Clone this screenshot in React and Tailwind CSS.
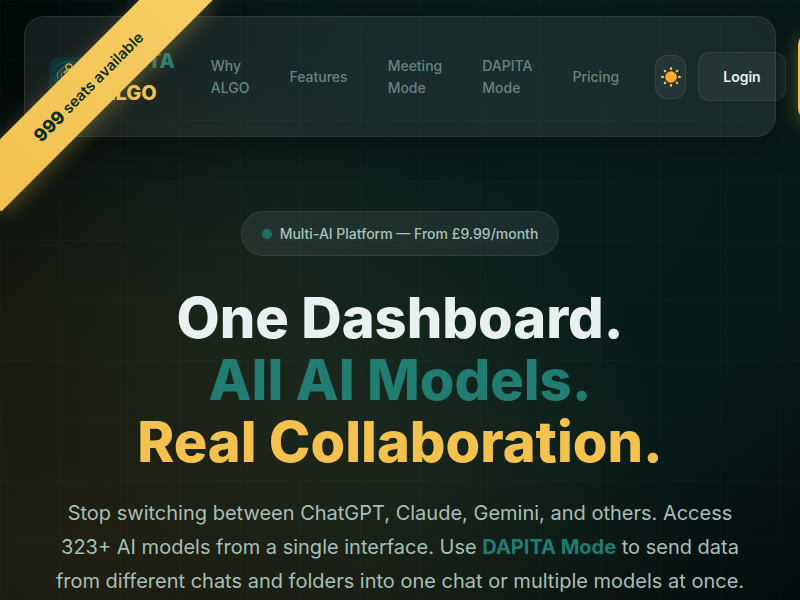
const links = ["Why ALGO", "Features", "Meeting Mode", "DAPITA Mode", "Pricing"];

const SunIcon = () => (
  <svg width="20" height="20" viewBox="0 0 20 20" aria-hidden="true">
    <circle cx="10" cy="10" r="5.8" fill="#ffa92e" />
    {[0, 45, 90, 135, 180, 225, 270, 315].map((angle) => (
      <path
        key={angle}
        d="M10 0 C10.8 0 11.2 0.9 11.2 1.9 C11.2 2.6 10.7 3 10 3 C9.3 3 8.8 2.6 8.8 1.9 C8.8 0.9 9.2 0 10 0 Z"
        fill="#ffbb55"
        transform={`rotate(${angle} 10 10)`}
      />
    ))}
  </svg>
);

const Logo = () => (
  <svg
    width="40"
    height="40"
    viewBox="0 0 40 40"
    className="shrink-0"
    aria-hidden="true"
  >
    <rect width="40" height="40" rx="10" fill="#0b3238" />
    <g fill="none" stroke="#17504f" strokeWidth="1">
      <path d="M5 22 L19 6 L35 20 L20 36 Z" />
      <path d="M3 14 C10 2 30 2 37 14" />
    </g>
    <path
      d="M9 22 L8 16 L16 9 M13 21 L12 17 L17 13"
      fill="none"
      stroke="#5f7f58"
      strokeWidth="1"
    />
    <circle cx="20" cy="10" r="3" fill="none" stroke="#c9a54c" strokeWidth="1.5" />
    <path d="M15 16 L20 12 L25 15" fill="none" stroke="#c9a54c" strokeWidth="1.5" />
  </svg>
);

const Ribbon = () => (
  <div className="absolute -left-[61px] top-[61px] z-20 flex h-[52px] w-[300px] -rotate-45 items-center justify-center gap-1 bg-linear-to-r from-[#f0c14f] to-[#f8ce64] text-[#0a2e24] shadow-[0_4px_20px_rgba(244,196,80,0.3)]">
    <span className="text-lg font-extrabold">999</span>
    <span className="text-[15px] font-semibold">seats available</span>
  </div>
);

const Navbar = () => (
  <header className="relative z-10 mx-6 flex items-center gap-9 rounded-[20px] border border-white/8 bg-[#ffffff12] px-6 py-4 shadow-[0_8px_32px_rgba(0,0,0,0.4)]">
    <a href="#home" className="flex shrink-0 items-center gap-[11px]">
      <Logo />
      <span className="flex flex-col text-xl leading-8 font-extrabold">
        <span className="text-[#217c72]">DAPITA</span>
        <span className="text-[#f2c14e]">ALGO</span>
      </span>
    </a>
    <nav className="flex shrink-0 items-center gap-10">
      {links.map((link) => (
        <a
          key={link}
          href="#section"
          className="w-min text-sm leading-[22px] font-medium text-[#67857e]"
        >
          {link}
        </a>
      ))}
    </nav>
    <div className="flex shrink-0 items-center gap-3">
      <button
        aria-label="Toggle theme"
        className="flex h-11 w-[31px] items-center justify-center rounded-xl border border-white/8 bg-white/5"
      >
        <SunIcon />
      </button>
      <button className="rounded-xl border border-white/8 bg-white/5 px-6 py-3 text-sm leading-[23px] font-semibold text-[#e8f1ef]">
        Login
      </button>
      <button
        aria-label="Get started"
        className="h-[87px] w-28 rounded-xl bg-[#f2c14e] shadow-[0_4px_20px_rgba(244,196,80,0.3)]"
      />
    </div>
  </header>
);

const Hero = () => (
  <main className="relative flex flex-col items-center px-6 pt-[74px] text-center">
    <div className="flex items-center gap-2 rounded-full border border-white/8 bg-[#ffffff12] px-5 py-[10px] text-sm leading-[23px] font-medium text-[#a9c2bb]">
      <span className="size-[10px] rounded-full bg-[#1f6f64]" />
      Multi-AI Platform — From £9.99/month
    </div>
    <h1 className="mt-[31px] text-[56px] leading-[62px] font-extrabold text-[#e8f1ef]">
      One Dashboard.
      <span className="block text-[#217c72]">All AI Models.</span>
      <span className="block text-[#f2c14e]">Real Collaboration.</span>
    </h1>
    <p className="mt-[23px] max-w-[700px] text-xl leading-[34px] text-[#a6bfb8]">
      Stop switching between ChatGPT, Claude, Gemini, and others. Access 323+ AI
      models from a single interface. Use{" "}
      <strong className="font-bold text-[#217c72]">DAPITA Mode</strong> to send
      data from different chats and folders into one chat or multiple models at
      once.
    </p>
  </main>
);

const App = () => {
  return (
    <div className="relative min-h-screen overflow-hidden bg-[#030a0a] bg-[radial-gradient(ellipse_75%_80%_at_12%_90%,rgba(235,185,75,0.12)_0%,rgba(235,185,75,0.09)_50%,transparent_100%),radial-gradient(ellipse_70%_95%_at_68%_25%,rgba(25,115,105,0.2)_0%,rgba(25,115,105,0.16)_50%,transparent_100%)] pt-4 font-['Inter',sans-serif]">
      {/* faint grid over the backdrop */}
      <div className="absolute inset-0 bg-[linear-gradient(rgba(33,124,114,0.04)_1px,transparent_1px),linear-gradient(90deg,rgba(33,124,114,0.04)_1px,transparent_1px)] bg-[size:60px_60px]" />
      <Ribbon />
      <Navbar />
      <Hero />
    </div>
  );
};

export default App;
